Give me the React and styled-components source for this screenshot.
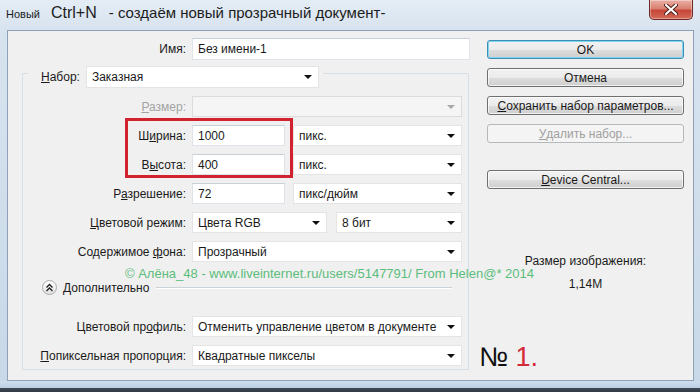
import styled, { createGlobalStyle } from "styled-components";

const GlobalStyle = createGlobalStyle`
  html, body {
    margin: 0;
    padding: 0;
  }
  body {
    width: 700px;
    height: 392px;
    overflow: hidden;
    background: #d6e2ee;
    font-family: "Liberation Sans", Arial, sans-serif;
    color: #1a1a1a;
  }
  * {
    box-sizing: border-box;
  }
`;

export default function App() {
  return (
    <>
      <GlobalStyle />
      <Window>
        <TitleBar>
          <Title>
            <SmallTitle>Новый</SmallTitle>
            <Shortcut>Ctrl+N</Shortcut>
            <Caption>- создаём новый прозрачный документ-</Caption>
          </Title>
          <CloseButton>
            <svg width="14" height="11" viewBox="0 0 14 11">
              <path
                d="M2 1 L12 10 M12 1 L2 10"
                stroke="#4a1a14"
                strokeWidth="4"
                strokeLinecap="round"
              />
              <path
                d="M2 1 L12 10 M12 1 L2 10"
                stroke="#fff"
                strokeWidth="2.2"
                strokeLinecap="round"
              />
            </svg>
          </CloseButton>
        </TitleBar>

        <Client>
          <Main>
            <NameRow>
              <Label>Имя:</Label>
              <TextInput $height={22}>Без имени-1</TextInput>
            </NameRow>

            <Group>
              <Legend>
                <LegendLabel>
                  <u>Н</u>абор:
                </LegendLabel>
                <Select $width={233} $height={22}>
                  Заказная
                </Select>
              </Legend>

              <FieldGrid $top={8}>
                <Label $disabled>
                  <u>Р</u>азмер:
                </Label>
                <Select $disabled />

                <Label>
                  Ш<u>и</u>рина:
                </Label>
                <Pair>
                  <TextInput $width={94}>1000</TextInput>
                  <Select $width={169}>пикс.</Select>
                </Pair>

                <Label>
                  В<u>ы</u>сота:
                </Label>
                <Pair>
                  <TextInput $width={94}>400</TextInput>
                  <Select $width={169}>пикс.</Select>
                </Pair>

                <Label>
                  Р<u>а</u>зрешение:
                </Label>
                <Pair>
                  <TextInput $width={94}>72</TextInput>
                  <Select $width={169}>пикс/дюйм</Select>
                </Pair>

                <Label>
                  <u>Ц</u>ветовой режим:
                </Label>
                <Pair $gap={9}>
                  <Select $width={135}>Цвета RGB</Select>
                  <Select $width={126}>8 бит</Select>
                </Pair>

                <Label>
                  Содержимое <u>ф</u>она:
                </Label>
                <Select>Прозрачный</Select>
              </FieldGrid>

              <Advanced>
                <ToggleCircle>
                  <svg width="9" height="9" viewBox="0 0 9 9">
                    <path
                      d="M1.5 4.5 L4.5 1.5 L7.5 4.5 M1.5 8 L4.5 5 L7.5 8"
                      stroke="#222"
                      strokeWidth="1.4"
                      fill="none"
                    />
                  </svg>
                </ToggleCircle>
                <AdvancedText>Дополнительно</AdvancedText>
                <Rule />
              </Advanced>

              <FieldGrid $top={21}>
                <Label>
                  Цветовой пр<u>о</u>филь:
                </Label>
                <Select>Отменить управление цветом в документе</Select>

                <Label>
                  <u>П</u>опиксельная пропорция:
                </Label>
                <Select>Квадратные пикселы</Select>
              </FieldGrid>
            </Group>
          </Main>

          <Side>
            <Button $default>OK</Button>
            <Button>Отмена</Button>
            <Button>
              <u>С</u>охранить набор параметров...
            </Button>
            <Button $disabled>
              <u>У</u>далить набор...
            </Button>
            <Button $top={18}>
              <u>D</u>evice Central...
            </Button>

            <SizeTitle>Размер изображения:</SizeTitle>
            <SizeValue>1,14M</SizeValue>

            <Mark>
              № <MarkNumber>1.</MarkNumber>
            </Mark>
          </Side>

          <Highlight />
          <Watermark>
            © Алёна_48 - www.liveinternet.ru/users/5147791/ From Helen@* 2014
          </Watermark>
        </Client>

        <BottomFrame />
      </Window>
    </>
  );
}

const Window = styled.div`
  width: 700px;
  height: 392px;
  display: flex;
  flex-direction: column;
  background: linear-gradient(to bottom, #e4edf6 0px, #d7e3ef 30px, #c8d8e8 100%);
`;

const TitleBar = styled.div`
  height: 30px;
  display: flex;
  justify-content: space-between;
  align-items: flex-start;
  padding: 0 7px 0 6px;
`;

const Title = styled.div`
  display: flex;
  align-items: baseline;
  padding-top: 4px;
  line-height: 18px;
  color: #1c1c1c;
  white-space: nowrap;
`;

const SmallTitle = styled.span`
  font-size: 11px;
`;

const Shortcut = styled.span`
  font-size: 16px;
  margin-left: 11px;
`;

const Caption = styled.span`
  font-size: 15px;
  margin-left: 12px;
`;

const CloseButton = styled.div`
  width: 44px;
  height: 20px;
  display: flex;
  align-items: center;
  justify-content: center;
  border: 1px solid #6e2a22;
  border-top: none;
  border-radius: 0 0 5px 5px;
  background: linear-gradient(
    to bottom,
    #eab0a4 0%,
    #d98070 45%,
    #c8473a 55%,
    #d26a58 100%
  );
  box-shadow: inset 0 0 0 1px rgba(255, 255, 255, 0.35);
`;

const Client = styled.div`
  position: relative;
  height: 351px;
  margin: 0 6px 0 7px;
  border: 1px solid #8ea1b6;
  background: #f0f0f0;
  display: flex;
`;

const Main = styled.div`
  width: 462px;
  padding-top: 7px;
  display: flex;
  flex-direction: column;
`;

const NameRow = styled.div`
  display: grid;
  grid-template-columns: 178px 278px;
  column-gap: 6px;
  align-items: center;
`;

const Label = styled.div`
  text-align: right;
  font-size: 12px;
  white-space: nowrap;
  color: ${(p) => (p.$disabled ? "#a3a3a3" : "#1a1a1a")};
`;

const LegendLabel = styled.span`
  font-size: 12px;
  margin-right: 6px;
`;

const field = `
  display: flex;
  align-items: center;
  font-size: 12px;
  padding-left: 5px;
  white-space: nowrap;
  overflow: hidden;
`;

const TextInput = styled.div`
  ${field}
  width: ${(p) => (p.$width ? `${p.$width}px` : "100%")};
  height: ${(p) => (p.$height ? `${p.$height}px` : "21px")};
  background: #fff;
  border: 1px solid #dde3e9;
  border-top-color: #c9cfd6;
`;

const Select = styled.div`
  ${field}
  position: relative;
  width: ${(p) => (p.$width ? `${p.$width}px` : "100%")};
  height: ${(p) => (p.$height ? `${p.$height}px` : "21px")};
  background: ${(p) => (p.$disabled ? "#f5f5f5" : "#fff")};
  border: 1px solid ${(p) => (p.$disabled ? "#dcdcdc" : "#e4e4e4")};
  flex-shrink: 0;
  &::after {
    content: "";
    position: absolute;
    right: 6px;
    top: 50%;
    margin-top: -2px;
    border-left: 4px solid transparent;
    border-right: 4px solid transparent;
    border-top: 4px solid ${(p) => (p.$disabled ? "#a8a8a8" : "#111")};
  }
`;

const Group = styled.fieldset`
  width: 447px;
  margin: -2px 0 0 14px;
  padding: 0 6px 3px 0;
  min-width: 0;
  border: 1px solid #d5dfe5;
`;

const Legend = styled.legend`
  display: flex;
  align-items: center;
  margin-left: 5px;
  padding: 8px 4px 0 13px;
`;

const FieldGrid = styled.div`
  display: grid;
  grid-template-columns: 163px 270px;
  grid-auto-rows: 21px;
  column-gap: 6px;
  row-gap: 8px;
  align-items: center;
  margin-top: ${(p) => p.$top}px;
`;

const Pair = styled.div`
  display: flex;
  gap: ${(p) => p.$gap || 8}px;
`;

const Advanced = styled.div`
  display: flex;
  align-items: center;
  height: 15px;
  margin: 18px 10px 0 19px;
`;

const ToggleCircle = styled.div`
  width: 15px;
  height: 15px;
  border-radius: 50%;
  border: 1px solid #a9a9a9;
  background: linear-gradient(to bottom, #ffffff, #e2e2e2);
  display: flex;
  align-items: center;
  justify-content: center;
`;

const AdvancedText = styled.span`
  font-size: 12px;
  margin-left: 6px;
`;

const Rule = styled.div`
  flex: 1;
  height: 1px;
  margin-left: 7px;
  background: #c9d2d9;
  box-shadow: 0 1px 0 #fff;
`;

const Side = styled.div`
  width: 197px;
  margin-left: 17px;
  padding: 9px 0 9px;
  display: flex;
  flex-direction: column;
`;

const Button = styled.div`
  height: 19px;
  margin-top: ${(p) => (p.$top !== undefined ? p.$top : 0)}px;
  margin-bottom: 9px;
  display: flex;
  align-items: center;
  justify-content: center;
  font-size: 12px;
  border-radius: 3px;
  color: ${(p) => (p.$disabled ? "#a0a0a0" : "#1a1a1a")};
  border: 1px solid
    ${(p) => (p.$default ? "#3c8fb5" : p.$disabled ? "#b5b9bc" : "#707070")};
  background: ${(p) =>
    p.$disabled
      ? "#f4f4f4"
      : "linear-gradient(to bottom, #f2f2f2 0%, #ebebeb 50%, #dddddd 51%, #cfcfcf 100%)"};
  box-shadow: ${(p) =>
    p.$default
      ? "inset 0 0 0 1px #7fd6f2"
      : p.$disabled
      ? "none"
      : "inset 0 0 0 1px rgba(255,255,255,0.7)"};
`;

const SizeTitle = styled.div`
  margin-top: 56px;
  font-size: 12px;
  line-height: 14px;
  text-align: center;
`;

const SizeValue = styled.div`
  margin-top: 9px;
  font-size: 12px;
  line-height: 14px;
  text-align: center;
`;

const Mark = styled.div`
  margin-top: auto;
  margin-left: -8px;
  font-size: 27px;
  line-height: 28px;
  color: #111;
`;

const MarkNumber = styled.span`
  color: #d42b3a;
`;

const Highlight = styled.div`
  position: absolute;
  left: 117px;
  top: 87px;
  width: 168px;
  height: 60px;
  border: 3px solid #d2222f;
  pointer-events: none;
`;

const Watermark = styled.div`
  position: absolute;
  left: 117px;
  top: 235px;
  font-size: 13px;
  line-height: 15px;
  color: #5bbd7c;
  white-space: nowrap;
`;

const BottomFrame = styled.div`
  flex: 1;
  background: linear-gradient(to bottom, #cfdeed 0%, #bcd0e4 60%, #3f4a57 65%, #2f3842 100%);
`;
